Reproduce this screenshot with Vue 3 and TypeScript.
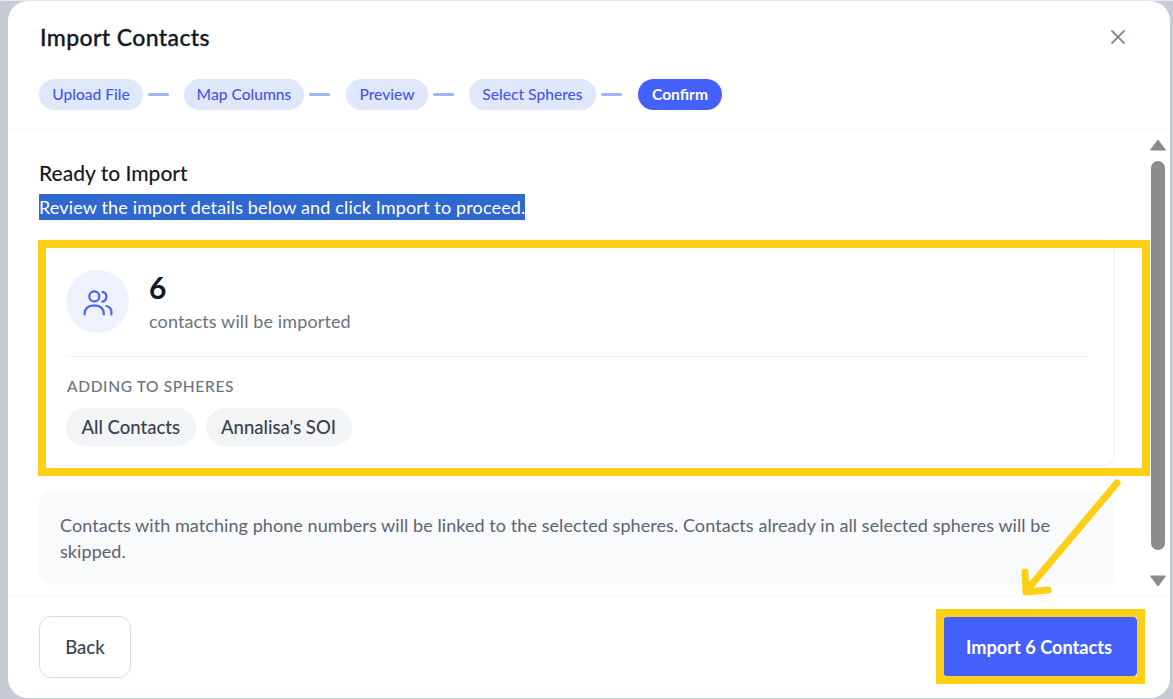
<script setup lang="ts">
const steps = [
  { label: 'Upload File', width: 104 },
  { label: 'Map Columns', width: 120 },
  { label: 'Preview', width: 82 },
  { label: 'Select Spheres', width: 127 },
  { label: 'Confirm', width: 84, active: true },
]
const spheres = ['All Contacts', "Annalisa's SOI"]
</script>

<template>
  <div class="page">
    <section class="modal">
      <header class="head">
        <div class="title-row">
          <h1>Import Contacts</h1>
          <svg class="close" width="16" height="16" viewBox="0 0 16 16" fill="none" stroke="#868b96" stroke-width="1.8" stroke-linecap="round">
            <path d="M2 2l12 12M14 2L2 14" />
          </svg>
        </div>
        <div class="steps">
          <template v-for="(s, i) in steps" :key="s.label">
            <span class="pill" :class="{ active: s.active }" :style="{ width: s.width + 'px' }">{{ s.label }}</span>
            <i v-if="i < steps.length - 1" class="dash"></i>
          </template>
        </div>
      </header>

      <main class="content">
        <h2>Ready to Import</h2>
        <p class="sub"><span>Review the import details below and click Import to proceed.</span></p>

        <div class="card">
          <div class="summary">
            <div class="avatar">
              <svg width="32" height="32" viewBox="0 0 32 32" fill="none" stroke="#4a63f0" stroke-width="2.2" stroke-linecap="round">
                <circle cx="12.3" cy="10.4" r="5" />
                <path d="M20.4 5.8a5 5 0 0 1 0 9.8" />
                <path d="M2.6 28.4v-1a7.8 7.8 0 0 1 7.8-7.8h3.6a7.8 7.8 0 0 1 7.8 7.8v1" />
                <path d="M24.4 20a6.4 6.4 0 0 1 5 6.2v2.2" />
              </svg>
            </div>
            <div>
              <div class="count">6</div>
              <div class="caption">contacts will be imported</div>
            </div>
          </div>
          <div class="adding">
            <div class="label">ADDING TO SPHERES</div>
            <div class="chips">
              <span v-for="s in spheres" :key="s" class="chip">{{ s }}</span>
            </div>
          </div>
        </div>

        <div class="note">
          Contacts with matching phone numbers will be linked to the selected spheres. Contacts already in all selected spheres will be skipped.
        </div>

        <div class="scrollbar">
          <svg width="16" height="12" viewBox="0 0 16 12"><path d="M8 1L15.5 11H.5z" fill="#8a8a8a" stroke="#8a8a8a" stroke-linejoin="round" /></svg>
          <div class="thumb"></div>
          <svg width="16" height="12" viewBox="0 0 16 12"><path d="M8 11L15.5 1H.5z" fill="#8a8a8a" stroke="#8a8a8a" stroke-linejoin="round" /></svg>
        </div>
      </main>

      <footer class="foot">
        <button class="back">Back</button>
        <button class="import">Import 6 Contacts</button>
      </footer>
    </section>

    <div class="mark mark-card"></div>
    <div class="mark mark-btn"></div>
    <svg class="arrow" width="1173" height="699" viewBox="0 0 1173 699" fill="none" stroke="#fdd017" stroke-width="7" stroke-linecap="round" stroke-linejoin="round">
      <path d="M1117 483L1027 590" />
      <path d="M1025 572L1026 592L1048 590" />
    </svg>
  </div>
</template>

<style>
html, body { margin: 0; background: #c6cbd4; }
</style>

<style scoped>
.page {
  position: relative;
  width: 1173px;
  height: 699px;
  overflow: hidden;
  box-sizing: border-box;
  padding: 1px 3px 1px 8px;
  background: linear-gradient(#e8e9ec 0 1px, #c6cbd4 1px);
  font-family: Lato, "Noto Sans", sans-serif;
  color: #111827;
}
.modal {
  height: 100%;
  background: #fff;
  border-radius: 20px;
  display: flex;
  flex-direction: column;
  overflow: hidden;
}
.head {
  height: 129px;
  flex: none;
  box-sizing: border-box;
  padding: 22px 44px 0 31px;
  border-bottom: 1px solid #f8f8fa;
}
.title-row {
  display: flex;
  justify-content: space-between;
  align-items: center;
  height: 28px;
}
h1 {
  margin: 0 0 0 1px;
  font-size: 23px;
  font-weight: 500;
  letter-spacing: 0.4px;
  -webkit-text-stroke: 0.3px #111827;
}
.steps {
  display: flex;
  align-items: center;
  margin-top: 28px;
}
.pill {
  box-sizing: border-box;
  height: 31px;
  padding-bottom: 2px;
  display: flex;
  align-items: center;
  justify-content: center;
  border-radius: 16px;
  background: #dfe8fb;
  color: #4a55e8;
  font-size: 15.6px;
  font-weight: 500;
  white-space: nowrap;
}
.pill.active {
  background: #4561fb;
  color: #fff;
  font-weight: 700;
}
.dash {
  width: 21px;
  height: 3px;
  margin: 0 15px 0 5px;
  background: #9fb5f5;
  border-radius: 2px;
}
.dash:nth-of-type(even) { margin-right: 16px; }
.content {
  position: relative;
  flex: 1;
  min-height: 0;
  box-sizing: border-box;
  padding: 30px 0 0 31px;
  overflow: hidden;
}
h2 {
  margin: 0;
  font-size: 21px;
  line-height: 25px;
  font-weight: 500;
  color: #16191f;
}
.sub {
  margin: 9px 0 0;
  height: 26px;
  font-size: 18px;
  line-height: 26px;
}
.sub span {
  display: inline-block;
  width: 486px;
  height: 26px;
  letter-spacing: 0.15px;
  background: #2f68cf;
  color: #fff;
  white-space: nowrap;
}
.card {
  box-sizing: border-box;
  width: 1076px;
  height: 227px;
  margin-top: 19px;
  padding: 30px 26px 0 27px;
  border: 1px solid #eef0f3;
  border-radius: 12px;
}
.summary {
  display: flex;
  align-items: flex-start;
  gap: 20px;
  height: 86px;
  border-bottom: 1px solid #f1f2f5;
}
.avatar {
  width: 63px;
  height: 63px;
  margin-left: -1px;
  border-radius: 50%;
  background: #edf2fd;
  display: flex;
  align-items: center;
  justify-content: center;
}
.count {
  margin-top: -1px;
  font-size: 30px;
  line-height: 36px;
  font-weight: 700;
}
.caption {
  margin-top: 5px;
  font-size: 18px;
  line-height: 22px;
  letter-spacing: 0.12px;
  color: #6b7280;
}
.adding { padding-top: 19px; }
.label {
  font-size: 15.5px;
  line-height: 20px;
  font-weight: 500;
  letter-spacing: 0.65px;
  color: #6b7280;
}
.chips {
  display: flex;
  gap: 10px;
  margin-top: 12px;
  margin-left: -1px;
}
.chip {
  box-sizing: border-box;
  height: 38px;
  padding: 0 15.5px;
  display: flex;
  align-items: center;
  border-radius: 19px;
  background: #f3f4f6;
  font-size: 18.5px;
  font-weight: 500;
  color: #374151;
}
.note {
  box-sizing: border-box;
  width: 1076px;
  height: 93px;
  margin-top: 26px;
  padding: 20px 21px 0;
  border-radius: 12px;
  background: #f9fafc;
  font-size: 18px;
  line-height: 26px;
  letter-spacing: 0.07px;
  color: #5b6472;
}
.scrollbar {
  position: absolute;
  top: 9px;
  right: 4px;
  bottom: 6px;
  width: 16px;
  display: flex;
  flex-direction: column;
  align-items: center;
}
.thumb {
  width: 14px;
  height: 389px;
  margin: 10px 0 25px;
  background: #8c8c8c;
  border-radius: 7px;
}
.foot {
  height: 103px;
  flex: none;
  box-sizing: border-box;
  padding: 20px 33px 0 31px;
  border-top: 1px solid #f8f8fa;
  display: flex;
  justify-content: space-between;
  align-items: flex-start;
}
button {
  font-family: inherit;
  cursor: pointer;
}
.back {
  width: 92px;
  height: 62px;
  padding-bottom: 1px;
  background: #fff;
  border: 1px solid #d8dbe0;
  border-radius: 12px;
  font-size: 18.5px;
  font-weight: 500;
  color: #374151;
}
.import {
  width: 194px;
  height: 59px;
  margin-top: 1px;
  padding: 0 2px 0 0;
  border: none;
  border-radius: 4px;
  background: #4561fb;
  color: #fff;
  font-size: 18.2px;
  font-weight: 700;
}
.mark {
  position: absolute;
  box-sizing: border-box;
  border: 8px solid #fdd017;
  pointer-events: none;
}
.mark-card { left: 38px; top: 240px; width: 1112px; height: 236px; }
.mark-btn { left: 936px; top: 609px; width: 209px; height: 75px; }
.arrow { position: absolute; left: 0; top: 0; pointer-events: none; }
</style>
